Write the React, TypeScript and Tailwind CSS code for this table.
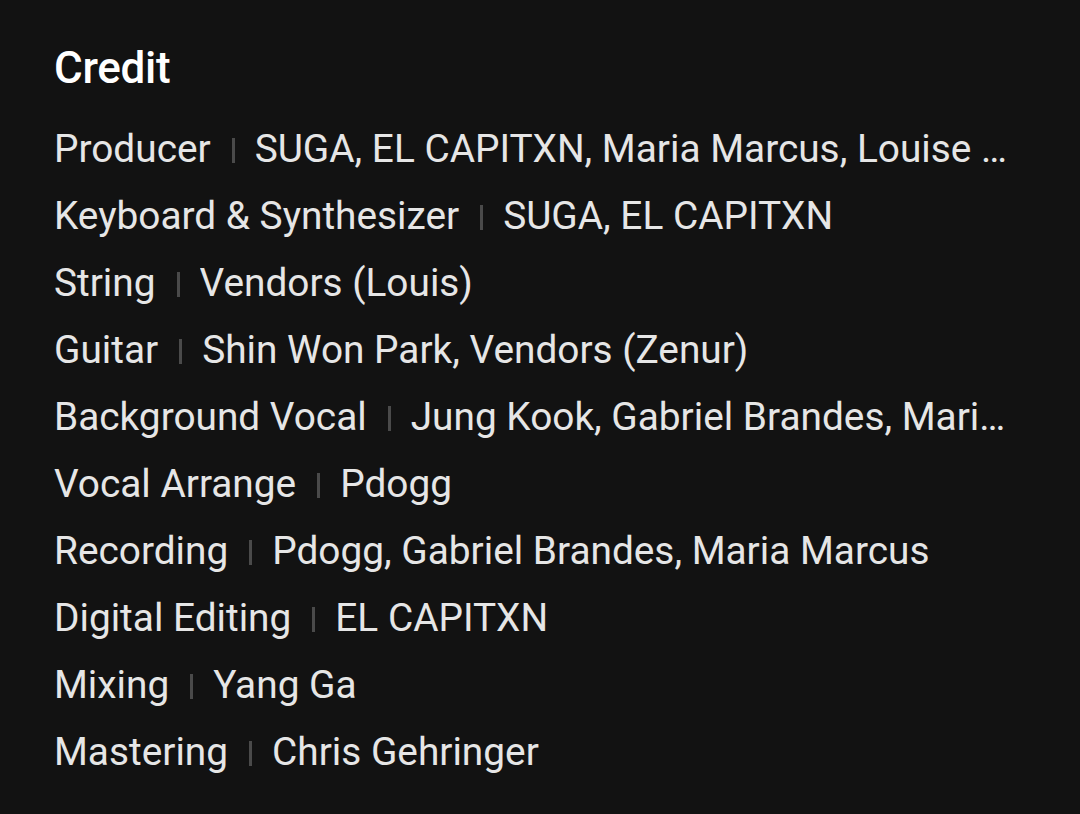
import React from "react";

const rows: [string, string][] = [
  ["Producer", "SUGA, EL CAPITXN, Maria Marcus, Louise Frick Sveen, Gabriel Brandes"],
  ["Keyboard & Synthesizer", "SUGA, EL CAPITXN"],
  ["String", "Vendors (Louis)"],
  ["Guitar", "Shin Won Park, Vendors (Zenur)"],
  ["Background Vocal", "Jung Kook, Gabriel Brandes, Maria Marcus"],
  ["Vocal Arrange", "Pdogg"],
  ["Recording", "Pdogg, Gabriel Brandes, Maria Marcus"],
  ["Digital Editing", "EL CAPITXN"],
  ["Mixing", "Yang Ga"],
  ["Mastering", "Chris Gehringer"],
];

export default function App() {
  return (
    <div className="w-[1080px] h-[814px] bg-[#121212] text-[#e6e6e6] pl-[54px] pr-[60px] pt-[38px] overflow-hidden" style={{ fontFamily: "Roboto, 'Noto Sans', sans-serif" }}>
      <h1 className="text-[44px] leading-[60px] font-medium text-white tracking-[-0.3px]">Credit</h1>
      <div className="mt-[18px] flex flex-col">
        {rows.map(([role, names]) => (
          <div key={role} className="flex items-center h-[67px] text-[38.8px] whitespace-nowrap">
            <span className="shrink-0">{role}</span>
            <span className="shrink-0 ml-[21px] mr-[20px] mt-[2px] w-[3px] h-[25px] bg-[#4a4a4a]" />
            <span className="min-w-0 overflow-hidden text-ellipsis">{names}</span>
          </div>
        ))}
      </div>
    </div>
  );
}
